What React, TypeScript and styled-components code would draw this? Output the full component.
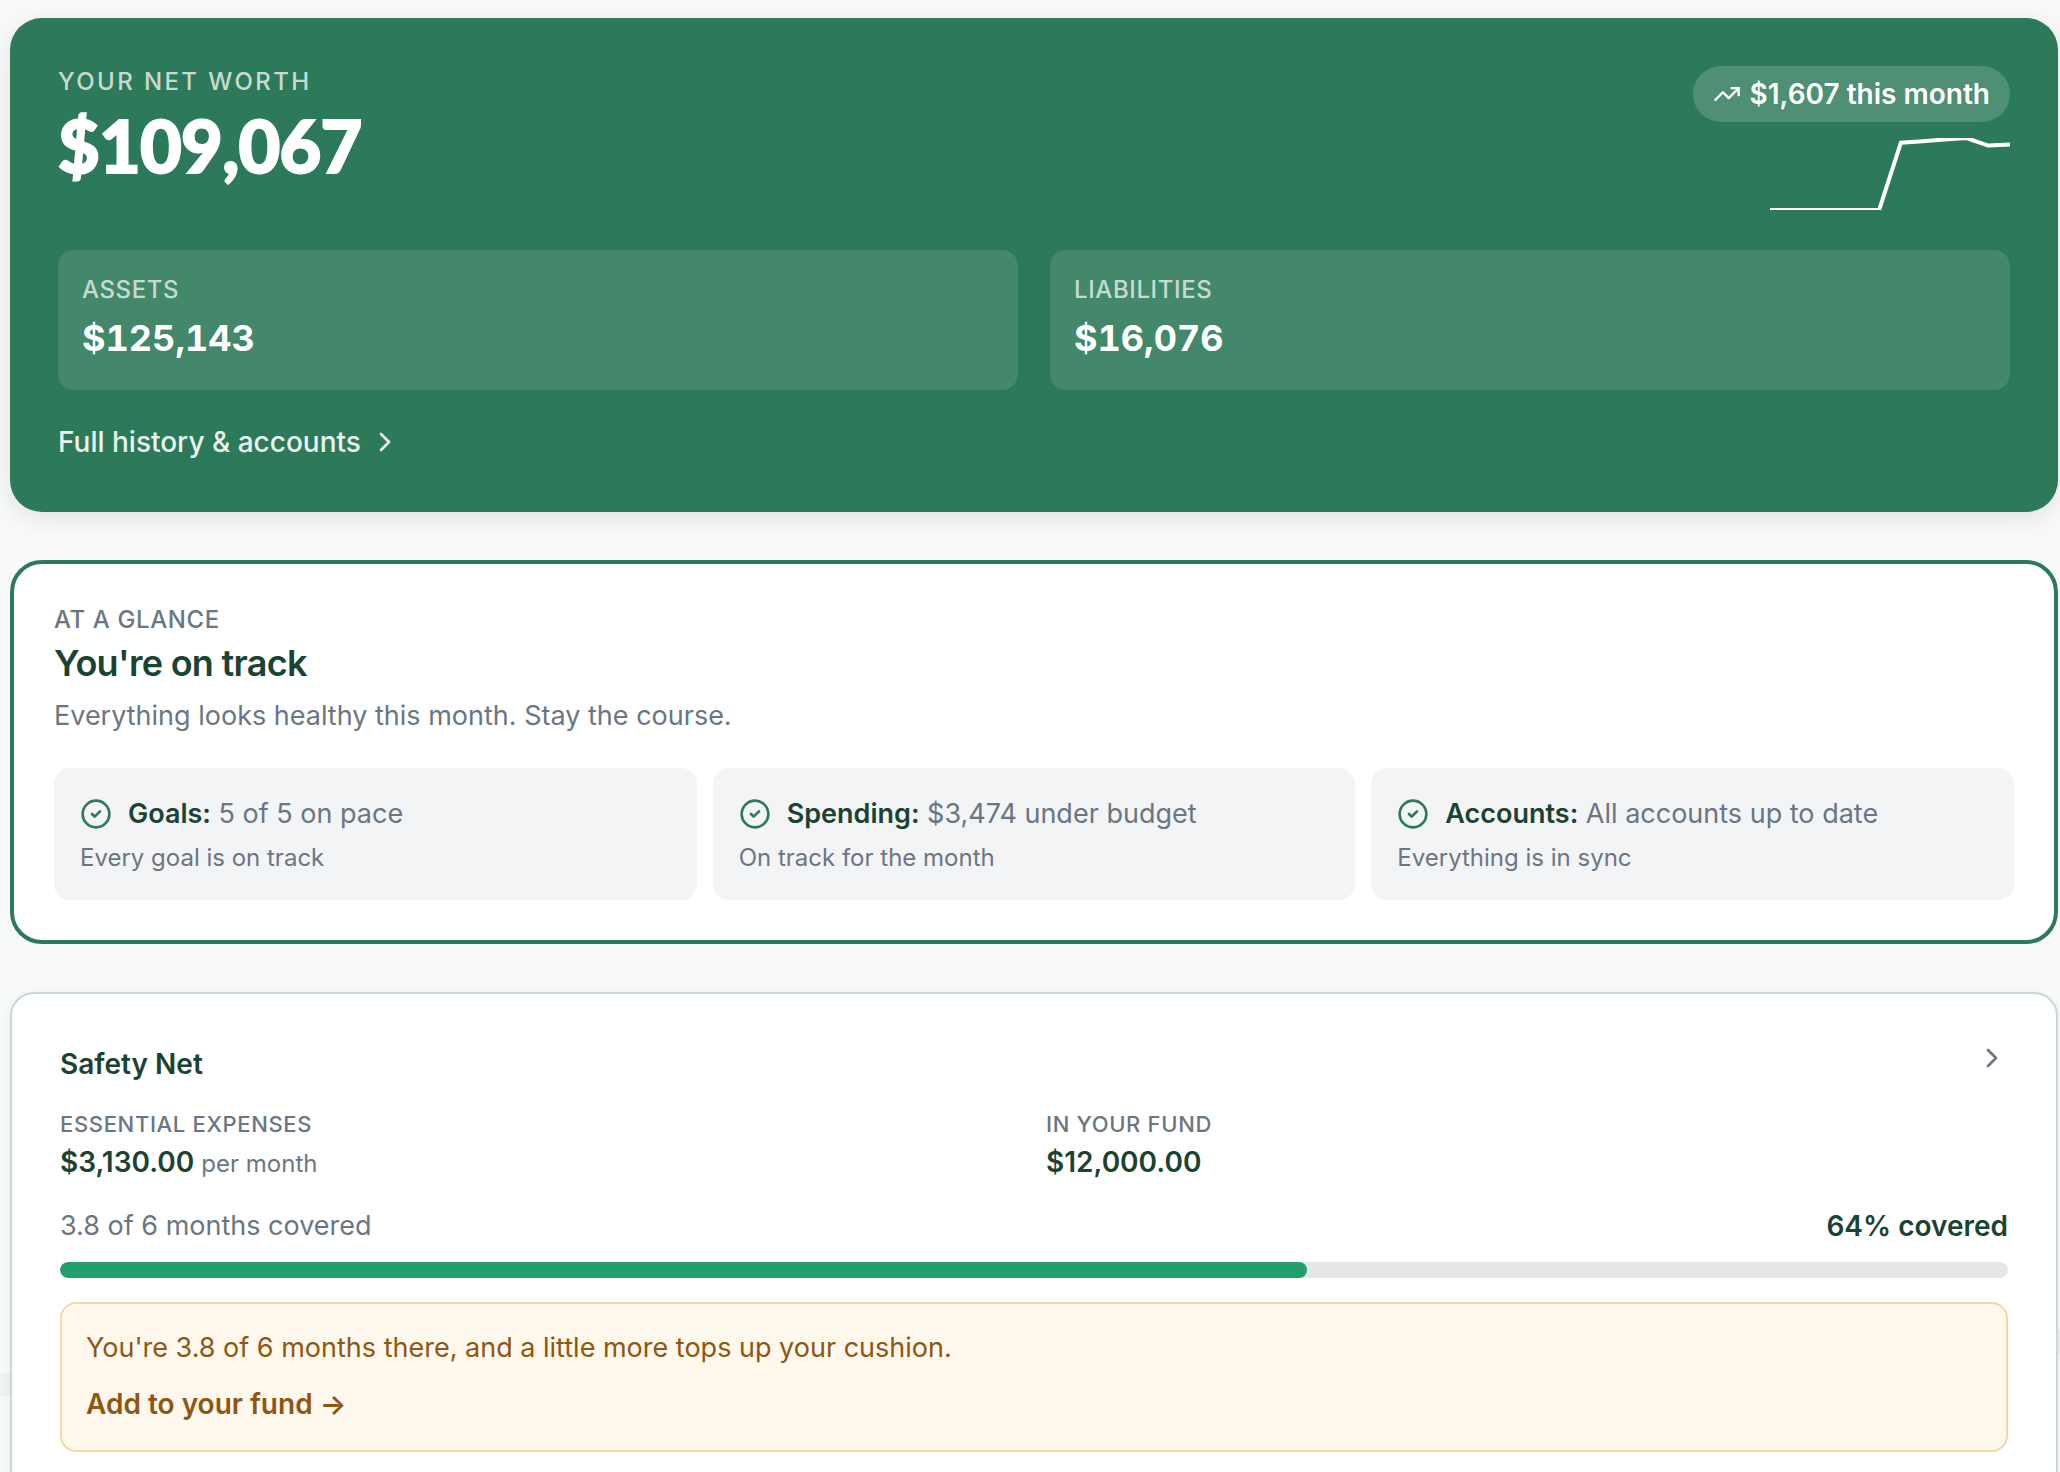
import React from "react";
import styled, { createGlobalStyle } from "styled-components";
import { ChevronRight, CircleCheck, TrendingUp } from "lucide-react";

const GlobalStyle = createGlobalStyle`
  *, *::before, *::after { box-sizing: border-box; }
  html, body { margin: 0; padding: 0; }
  body {
    background: #f8faf9;
    color: #1b4332;
    font-family: Inter, "Liberation Sans", sans-serif;
    font-size: 28px;
  }
  h1, h2, p { margin: 0; font-weight: inherit; font-size: inherit; }
`;

const Page = styled.main`
  position: relative;
  height: 100vh;
  overflow: hidden;
  padding: 18px 2px 0 10px;
`;

const Stack = styled.div`
  position: relative;
  display: flex;
  flex-direction: column;
  gap: 48px;
`;

const Band = styled.span<{ $side: "left" | "right"; $top: number }>`
  position: absolute;
  top: ${(p) => p.$top}px;
  ${(p) => p.$side}: 0;
  width: 10px;
  height: 23px;
  background: #f0f2f1;
`;

const Hero = styled.section`
  display: flex;
  flex-direction: column;
  padding: 48px;
  border-radius: 32px;
  background: #2d7a5a;
  color: #ffffff;
  box-shadow: 0 6px 24px rgba(27, 30, 50, 0.1);
`;

const HeroTop = styled.div`
  display: flex;
  justify-content: space-between;
  align-items: flex-start;
  margin-bottom: 40px;
`;

const Label = styled.p<{ $tone?: "light" | "muted"; $wide?: boolean; $small?: boolean }>`
  color: ${(p) => (p.$tone === "light" ? "#c7dad1" : "#6b7682")};
  font-size: ${(p) => (p.$small ? 22 : 24)}px;
  font-weight: 500;
  line-height: 32px;
  letter-spacing: ${(p) => (p.$wide ? "0.1em" : p.$small ? "0.03em" : "0.025em")};
  text-transform: uppercase;
`;

const NetWorth = styled.p`
  font-family: Lato, Inter, sans-serif;
  font-size: 72px;
  font-weight: 900;
  line-height: 94px;
  letter-spacing: -0.01em;
  -webkit-text-stroke: 2px #ffffff;
`;

const Trend = styled.div`
  display: flex;
  flex-direction: column;
  align-items: flex-end;
  gap: 16px;
`;

const Pill = styled.span`
  display: flex;
  align-items: center;
  gap: 8px;
  height: 56px;
  padding: 0 20px;
  border-radius: 28px;
  background: #4f8f73;
  font-weight: 600;
`;

const Spark = styled.svg`
  display: block;
  width: 240px;
  height: 72px;
  overflow: hidden;
`;

const Totals = styled.div`
  display: grid;
  grid-template-columns: 1fr 1fr;
  gap: 32px;
`;

const Total = styled.div`
  display: grid;
  gap: 4px;
  padding: 24px;
  border-radius: 16px;
  background: #44886b;
`;

const TotalValue = styled.p`
  font-size: 36px;
  font-weight: 700;
  line-height: 56px;
  font-variant-numeric: tabular-nums;
`;

const HeroLink = styled.a`
  display: flex;
  align-items: center;
  align-self: flex-start;
  gap: 8px;
  margin-top: 30px;
  color: #eaf2ee;
  font-weight: 500;
  line-height: 44px;
  text-decoration: none;
`;

const Glance = styled.section`
  padding: 40px;
  border: 4px solid #2d7a5a;
  border-radius: 32px;
  background: #ffffff;
`;

const GlanceTitle = styled.h2`
  margin-top: 4px;
  font-size: 36px;
  font-weight: 600;
  line-height: 46px;
  letter-spacing: -0.02em;
`;

const GlanceText = styled.p`
  margin: 10px 0 32px;
  color: #6b7682;
  font-size: 27px;
  line-height: 40px;
`;

const Tiles = styled.div`
  display: grid;
  grid-template-columns: repeat(3, 1fr);
  gap: 16px;
`;

const Tile = styled.div`
  padding: 24px;
  border: 2px solid #f2f4f6;
  border-radius: 16px;
  background: #f2f4f6;
  color: #6b7682;
`;

const TileHead = styled.div`
  display: flex;
  align-items: center;
  gap: 16px;
  margin-bottom: 8px;
  font-size: 27px;
  line-height: 40px;

  svg {
    color: #2d7a5a;
  }

  strong {
    color: #1b4332;
    font-weight: 600;
  }
`;

const TileNote = styled.p`
  font-size: 24px;
  line-height: 32px;
`;

const Safety = styled.section`
  padding: 48px;
  border: 2px solid #c7dad1;
  border-radius: 24px;
  background: #ffffff;
  box-shadow: 0 2px 8px rgba(27, 30, 50, 0.06);
`;

const SafetyHead = styled.div`
  display: flex;
  justify-content: space-between;
  align-items: flex-start;
  margin-bottom: 22px;
`;

const SafetyTitle = styled.h2`
  font-weight: 600;
  line-height: 44px;
`;

const IconButton = styled.button`
  display: block;
  padding: 0;
  border: 0;
  background: none;
  color: #6b7682;
  line-height: 0;
`;

const Figures = styled.div`
  display: grid;
  grid-template-columns: 1fr 1fr;
  gap: 24px;
`;

const Figure = styled.p`
  font-weight: 600;
  line-height: 44px;

  small {
    color: #6b7682;
    font-size: 24px;
    font-weight: 400;
  }
`;

const Coverage = styled.div`
  display: flex;
  justify-content: space-between;
  margin: 20px 0 16px;
  color: #6b7682;
  font-size: 27px;
  line-height: 40px;

  strong {
    color: #1b4332;
    font-size: 28px;
    font-weight: 600;
  }
`;

const Track = styled.div`
  height: 16px;
  border-radius: 8px;
  background: #e5e7e9;
  overflow: hidden;
`;

const Fill = styled.div`
  height: 100%;
  border-radius: 8px;
  background: #239f6c;
`;

const Notice = styled.div`
  display: flex;
  flex-direction: column;
  gap: 14px;
  margin-top: 24px;
  padding: 24px;
  border: 2px solid #f0d9a8;
  border-radius: 16px;
  background: #fff8ec;
  color: #8f5612;
  font-size: 27px;
  line-height: 40px;
`;

const NoticeLink = styled.a`
  align-self: flex-start;
  color: inherit;
  font-size: 28px;
  font-weight: 600;
  line-height: 44px;
  text-decoration: none;
`;

const history = [72, 72, 72, 72, 72, 72, 4.7, 3.2, 1.5, 0, 7.6, 6.5];
const sparkPoints = history.map((y, i) => `${((i * 240) / 11).toFixed(1)},${y}`).join(" ");

const checks = [
  { name: "Goals", status: "5 of 5 on pace", note: "Every goal is on track" },
  { name: "Spending", status: "$3,474 under budget", note: "On track for the month" },
  { name: "Accounts", status: "All accounts up to date", note: "Everything is in sync" },
];

const coveredPercent = 64;

export default function App() {
  return (
    <Page>
      <GlobalStyle />
      <Band $side="left" $top={1373} />
      <Band $side="right" $top={1330} />
      <Stack>
        <Hero>
          <HeroTop>
            <div>
              <Label as="h1" $tone="light" $wide>Your net worth</Label>
              <NetWorth>$109,067</NetWorth>
            </div>
            <Trend>
              <Pill>
                <TrendingUp size={28} strokeWidth={2} />
                $1,607 this month
              </Pill>
              <Spark viewBox="0 0 240 72" role="img" aria-label="Net worth trend">
                <polyline points={sparkPoints} fill="none" stroke="#ffffff" strokeWidth="4" />
              </Spark>
            </Trend>
          </HeroTop>
          <Totals>
            <Total>
              <Label $tone="light">Assets</Label>
              <TotalValue>$125,143</TotalValue>
            </Total>
            <Total>
              <Label $tone="light">Liabilities</Label>
              <TotalValue>$16,076</TotalValue>
            </Total>
          </Totals>
          <HeroLink href="#accounts">
            Full history &amp; accounts
            <ChevronRight size={32} strokeWidth={2} />
          </HeroLink>
        </Hero>

        <Glance>
          <Label>At a glance</Label>
          <GlanceTitle>You're on track</GlanceTitle>
          <GlanceText>Everything looks healthy this month. Stay the course.</GlanceText>
          <Tiles>
            {checks.map((c) => (
              <Tile key={c.name}>
                <TileHead>
                  <CircleCheck size={32} strokeWidth={2} />
                  <span>
                    <strong>{c.name}:</strong> {c.status}
                  </span>
                </TileHead>
                <TileNote>{c.note}</TileNote>
              </Tile>
            ))}
          </Tiles>
        </Glance>

        <Safety>
          <SafetyHead>
            <SafetyTitle>Safety Net</SafetyTitle>
            <IconButton type="button" aria-label="Open Safety Net">
              <ChevronRight size={32} strokeWidth={2} />
            </IconButton>
          </SafetyHead>
          <Figures>
            <div>
              <Label $small>Essential expenses</Label>
              <Figure>
                $3,130.00 <small>per month</small>
              </Figure>
            </div>
            <div>
              <Label $small>In your fund</Label>
              <Figure>$12,000.00</Figure>
            </div>
          </Figures>
          <Coverage>
            <span>3.8 of 6 months covered</span>
            <strong>{coveredPercent}% covered</strong>
          </Coverage>
          <Track role="progressbar" aria-valuenow={coveredPercent} aria-valuemin={0} aria-valuemax={100} aria-label="Months covered">
            <Fill style={{ width: `${coveredPercent}%` }} />
          </Track>
          <Notice>
            <p>You're 3.8 of 6 months there, and a little more tops up your cushion.</p>
            <NoticeLink href="#fund">Add to your fund →</NoticeLink>
          </Notice>
        </Safety>
      </Stack>
    </Page>
  );
}
